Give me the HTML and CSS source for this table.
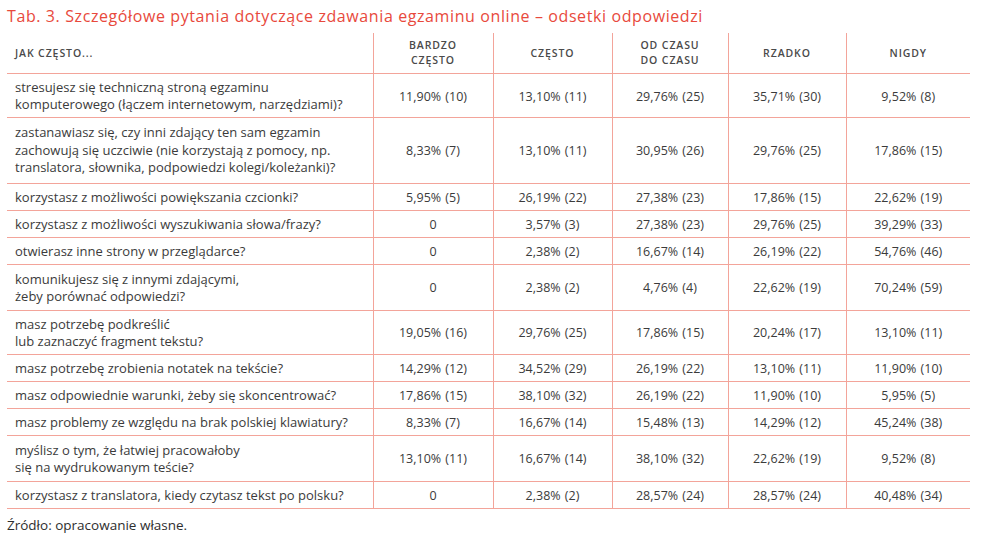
FILE: index.html
```html
<!DOCTYPE html>
<html lang="pl">
<head>
<meta charset="utf-8">
<title>Tab. 3</title>
<link rel="stylesheet" href="styles.css">
</head>
<body>
<div class="page">
  <h1 class="title">Tab. 3. Szczegółowe pytania dotyczące zdawania egzaminu online – odsetki odpowiedzi</h1>
  <table class="grid">
    <colgroup>
      <col class="c-q"><col class="c-1"><col class="c-2"><col class="c-3"><col class="c-4"><col class="c-5">
    </colgroup>
    <thead>
      <tr>
        <th class="q">Jak często...</th>
        <th>Bardzo<br>często</th>
        <th>Często</th>
        <th>Od czasu<br>do czasu</th>
        <th>Rzadko</th>
        <th>Nigdy</th>
      </tr>
    </thead>
    <tbody>
      <tr><td class="q">stresujesz się techniczną stroną egzaminu<br>komputerowego (łączem internetowym, narzędziami)?</td><td>11,90% (10)</td><td>13,10% (11)</td><td>29,76% (25)</td><td>35,71% (30)</td><td>9,52% (8)</td></tr>
      <tr class="triple"><td class="q">zastanawiasz się, czy inni zdający ten sam egzamin<br>zachowują się uczciwie (nie korzystają z pomocy, np.<br>translatora, słownika, podpowiedzi kolegi/koleżanki)?</td><td>8,33% (7)</td><td>13,10% (11)</td><td>30,95% (26)</td><td>29,76% (25)</td><td>17,86% (15)</td></tr>
      <tr><td class="q">korzystasz z możliwości powiększania czcionki?</td><td>5,95% (5)</td><td>26,19% (22)</td><td>27,38% (23)</td><td>17,86% (15)</td><td>22,62% (19)</td></tr>
      <tr><td class="q">korzystasz z możliwości wyszukiwania słowa/frazy?</td><td>0</td><td>3,57% (3)</td><td>27,38% (23)</td><td>29,76% (25)</td><td>39,29% (33)</td></tr>
      <tr><td class="q">otwierasz inne strony w przeglądarce?</td><td>0</td><td>2,38% (2)</td><td>16,67% (14)</td><td>26,19% (22)</td><td>54,76% (46)</td></tr>
      <tr class="tall"><td class="q">komunikujesz się z innymi zdającymi,<br>żeby porównać odpowiedzi?</td><td>0</td><td>2,38% (2)</td><td>4,76% (4)</td><td>22,62% (19)</td><td>70,24% (59)</td></tr>
      <tr><td class="q">masz potrzebę podkreślić<br>lub zaznaczyć fragment tekstu?</td><td>19,05% (16)</td><td>29,76% (25)</td><td>17,86% (15)</td><td>20,24% (17)</td><td>13,10% (11)</td></tr>
      <tr><td class="q">masz potrzebę zrobienia notatek na tekście?</td><td>14,29% (12)</td><td>34,52% (29)</td><td>26,19% (22)</td><td>13,10% (11)</td><td>11,90% (10)</td></tr>
      <tr><td class="q">masz odpowiednie warunki, żeby się skoncentrować?</td><td>17,86% (15)</td><td>38,10% (32)</td><td>26,19% (22)</td><td>11,90% (10)</td><td>5,95% (5)</td></tr>
      <tr><td class="q">masz problemy ze względu na brak polskiej klawiatury?</td><td>8,33% (7)</td><td>16,67% (14)</td><td>15,48% (13)</td><td>14,29% (12)</td><td>45,24% (38)</td></tr>
      <tr class="tall"><td class="q">myślisz o tym, że łatwiej pracowałoby<br>się na wydrukowanym teście?</td><td>13,10% (11)</td><td>16,67% (14)</td><td>38,10% (32)</td><td>22,62% (19)</td><td>9,52% (8)</td></tr>
      <tr><td class="q">korzystasz z translatora, kiedy czytasz tekst po polsku?</td><td>0</td><td>2,38% (2)</td><td>28,57% (24)</td><td>28,57% (24)</td><td>40,48% (34)</td></tr>
    </tbody>
  </table>
  <p class="source">Źródło: opracowanie własne.</p>
</div>
</body>
</html>
```

FILE: styles.css
```css
html, body {
  margin: 0;
  padding: 0;
  background: #ffffff;
}

.page {
  padding: 6px 7px 0 7px;
  font-family: "Open Sans", Lato, sans-serif;
  color: #3b3b3b;
}

.title {
  margin: 0;
  height: 27px;
  font-size: 16px;
  line-height: 20px;
  font-weight: 500;
  color: #e8493c;
  letter-spacing: 0.6px;
}

.grid {
  width: 963px;
  border-collapse: collapse;
  table-layout: fixed;
}

.c-q { width: 366px; }
.c-1 { width: 120px; }
.c-2 { width: 119px; }
.c-3 { width: 116px; }
.c-4 { width: 118px; }
.c-5 { width: 124px; }

.grid th,
.grid td {
  border-left: 1px solid #f3a49a;
  text-align: center;
  vertical-align: middle;
}

.grid th:first-child,
.grid td:first-child {
  border-left: none;
}

.grid th {
  font-size: 10.5px;
  line-height: 15px;
  font-weight: 600;
  text-transform: uppercase;
  letter-spacing: 0.9px;
  color: #4a4a4a;
  padding: 5px 6px;
  border-bottom: 1px solid #f3a49a;
}

.grid th.q {
  text-align: left;
  padding-left: 8px;
}

.grid td {
  font-size: 12.5px;
  line-height: 17px;
  padding: 5px 6px 4px 6px;
  border-bottom: 1px solid #f3a49a;
  word-spacing: 1px;
}

.grid td.q {
  font-size: 13px;
  text-align: left;
  padding-left: 8px;
  word-spacing: 0;
}

.grid tr.tall td {
  padding-top: 6px;
  padding-bottom: 5px;
}

.grid tr.triple td {
  padding-top: 6px;
  padding-bottom: 6px;
  line-height: 17.5px;
}

.source {
  margin: 8px 0 0 0;
  font-size: 13.5px;
  line-height: 16px;
  color: #2e2e2e;
}
```
